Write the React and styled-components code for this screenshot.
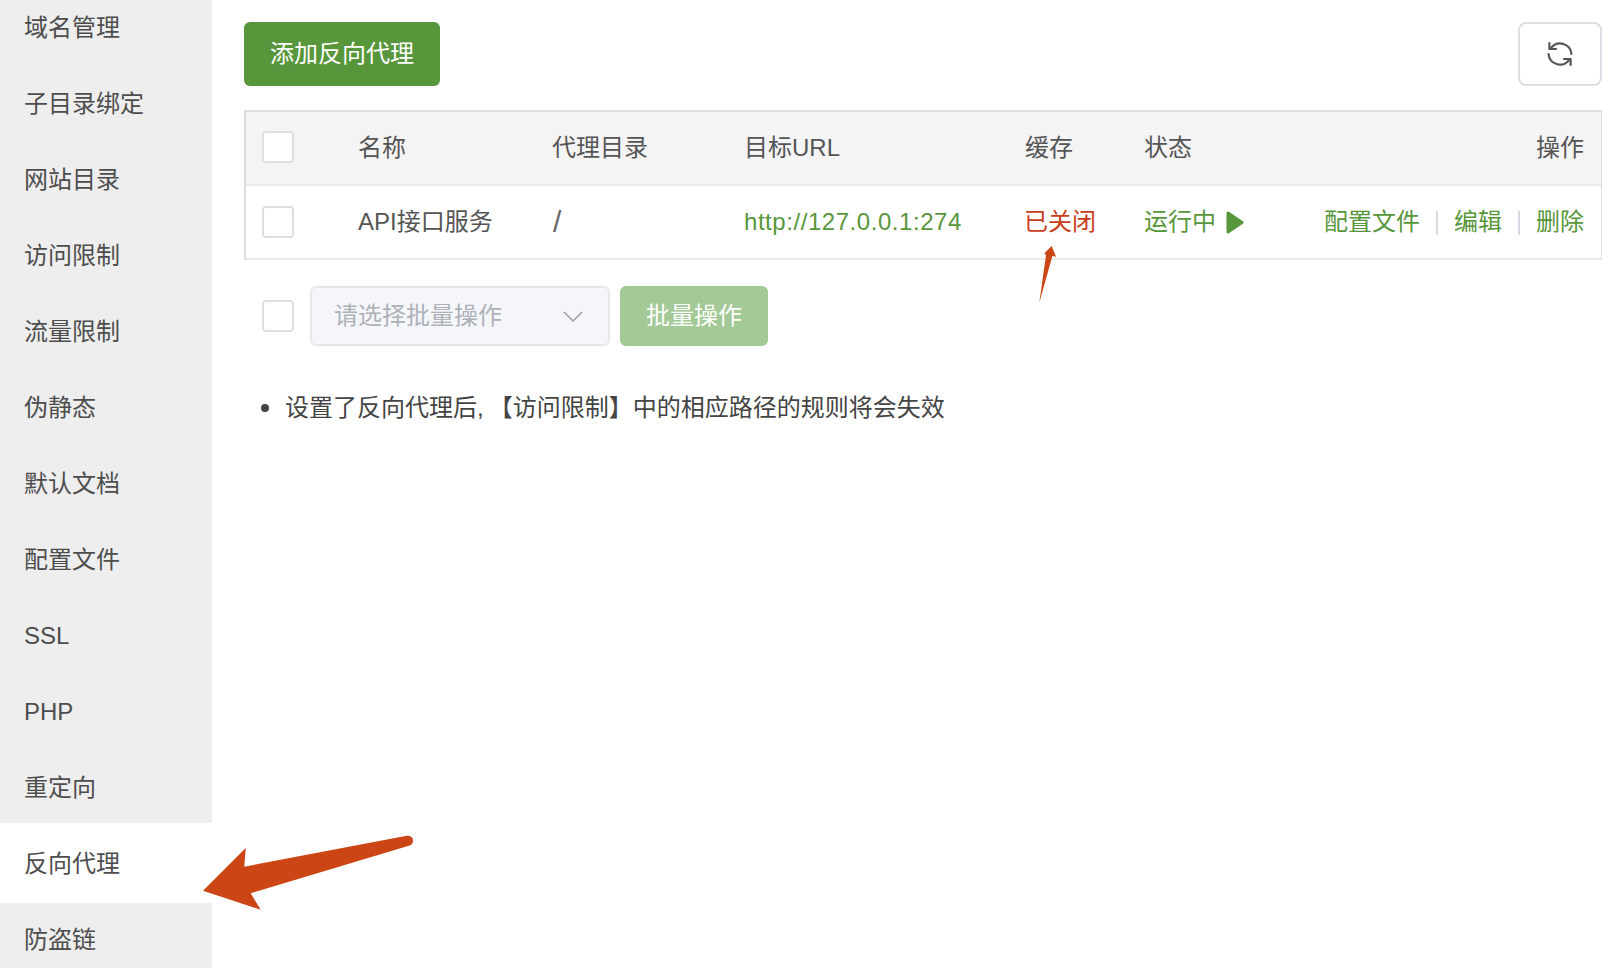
import styled, { createGlobalStyle } from "styled-components";

const GlobalStyle = createGlobalStyle`
  html, body {
    margin: 0;
    padding: 0;
    background: #fff;
    overflow: hidden;
  }
  body {
    font-family: "Liberation Sans", "Noto Sans CJK SC", sans-serif;
    font-size: 24px;
    line-height: 24px;
    color: #444;
  }
  * {
    box-sizing: border-box;
  }
`;

const Page = styled.div`
  position: relative;
  display: flex;
  width: 1602px;
  height: 968px;
  overflow: hidden;
`;

const Sidebar = styled.nav`
  flex: 0 0 212px;
  background: #eee;
  height: 100%;
`;

const SideList = styled.ul`
  list-style: none;
  margin: -11px 0 0;
  padding: 0;
`;

const SideItem = styled.li`
  position: relative;
  height: 76px;
  line-height: 78px;
  padding-left: 24px;
  color: #4d4d4d;
  background: ${(p) => (p.$active ? "#fff" : "transparent")};
  box-shadow: ${(p) => (p.$active ? "0 2px 0 #fff, 0 -2px 0 #fff" : "none")};
`;

const Content = styled.main`
  flex: 1;
  min-width: 0;
  padding-top: 22px;
  padding-left: 32px;
`;

const Toolbar = styled.div`
  display: flex;
  justify-content: space-between;
  align-items: center;
  height: 64px;
`;

const PrimaryButton = styled.button`
  height: ${(p) => p.$height || 64}px;
  width: ${(p) => p.$width}px;
  padding: 0;
  border: 0;
  border-radius: 6px;
  background: ${(p) => (p.$disabled ? "#a2c996" : "#58963c")};
  color: #fff;
  font: inherit;
`;

const RefreshButton = styled.button`
  display: flex;
  align-items: center;
  justify-content: center;
  width: 84px;
  height: 64px;
  padding: 0;
  border: 2px solid #dcdfe6;
  border-radius: 8px;
  background: #fff;
`;

const Table = styled.div`
  margin-top: 24px;
  border: 2px solid #ddd;
  border-bottom: 0;
  border-right-width: 1px;
`;

const Row = styled.div`
  display: grid;
  grid-template-columns: 96px 194px 192px 281px 119px 1fr auto;
  align-items: center;
  height: 74px;
  padding: 0 17px 0 16px;
  background: ${(p) => (p.$head ? "#f4f4f4" : "#fff")};
  border-bottom: 2px solid #e8eaef;
  color: #555;
`;

const CheckBox = styled.span`
  display: block;
  width: 32px;
  height: 32px;
  margin-bottom: ${(p) => (p.$raised ? 2 : 0)}px;
  border: 2px solid #dcdfe6;
  border-radius: 4px;
  background: #fff;
`;

const Slash = styled.span`
  padding-left: 1px;
  font-size: 30px;
  color: #666;
`;

const Url = styled.span`
  color: #58963c;
  letter-spacing: 0.55px;
`;

const Closed = styled.span`
  margin-left: -1px;
  color: #c93c1b;
`;

const Running = styled.span`
  display: flex;
  align-items: center;
  gap: 10px;
  color: #58963c;
`;

const Actions = styled.div`
  display: flex;
  align-items: center;
  color: #58963c;
  white-space: nowrap;
`;

const Divider = styled.span`
  width: 2px;
  height: 24px;
  margin: 1px 16px 0;
  background: #d5dae3;
`;

const BatchBar = styled.div`
  display: flex;
  align-items: center;
  height: 60px;
  margin-top: 26px;
  padding-left: 18px;
`;

const Select = styled.div`
  display: flex;
  align-items: center;
  justify-content: space-between;
  width: 300px;
  height: 60px;
  margin: 0 10px 0 16px;
  padding: 0 25px 0 22px;
  border: 2px solid #e4e7ed;
  border-radius: 6px;
  background: #f5f6fa;
  color: #aeb1b8;
`;

const Notes = styled.ul`
  list-style: none;
  margin: 50px 0 0;
  padding: 0 0 0 17px;
  color: #444;
`;

const Note = styled.li`
  display: flex;
  align-items: center;
  gap: 16px;
  &::before {
    content: "";
    width: 8px;
    height: 8px;
    border-radius: 50%;
    background: #444;
  }
`;

const Comma = styled.span`
  margin-right: 5px;
`;

const Overlay = styled.svg`
  position: absolute;
  left: 0;
  top: 0;
  pointer-events: none;
`;

const menu = [
  "域名管理",
  "子目录绑定",
  "网站目录",
  "访问限制",
  "流量限制",
  "伪静态",
  "默认文档",
  "配置文件",
  "SSL",
  "PHP",
  "重定向",
  "反向代理",
  "防盗链",
];

const RefreshIcon = () => (
  <svg width="28" height="28" viewBox="0 0 28 28" fill="none" stroke="#555" strokeWidth="2.2" strokeLinecap="round" strokeLinejoin="round">
    <path d="M5.2 7.6A11.4 11.4 0 0 1 25.4 14" />
    <path d="M2.6 14A11.4 11.4 0 0 0 22.8 20.4" />
    <path d="M3.4 3v6h6.6" />
    <path d="M24.6 25v-6H18" />
  </svg>
);

const PlayIcon = () => (
  <svg width="18" height="23" viewBox="0 0 18 23">
    <path d="M2 2L16 11.5L2 21Z" fill="#58963c" stroke="#58963c" strokeWidth="3" strokeLinejoin="round" />
  </svg>
);

const Chevron = () => (
  <svg width="20" height="11" viewBox="0 0 20 11" fill="none" stroke="#9a9da6" strokeWidth="1.5">
    <path d="M1 1l9 9 9-9" />
  </svg>
);

const App = () => {
  return (
    <Page>
      <GlobalStyle />
      <Sidebar>
        <SideList>
          {menu.map((m) => (
            <SideItem key={m} $active={m === "反向代理"}>
              {m}
            </SideItem>
          ))}
        </SideList>
      </Sidebar>
      <Content>
        <Toolbar>
          <PrimaryButton $width={196}>添加反向代理</PrimaryButton>
          <RefreshButton>
            <RefreshIcon />
          </RefreshButton>
        </Toolbar>
        <Table>
          <Row $head>
            <CheckBox $raised />
            <span>名称</span>
            <span>代理目录</span>
            <span>目标URL</span>
            <span>缓存</span>
            <span>状态</span>
            <span>操作</span>
          </Row>
          <Row>
            <CheckBox />
            <span>API接口服务</span>
            <Slash>/</Slash>
            <Url>http://127.0.0.1:274</Url>
            <Closed>已关闭</Closed>
            <Running>
              运行中 <PlayIcon />
            </Running>
            <Actions>
              配置文件
              <Divider />
              编辑
              <Divider />
              删除
            </Actions>
          </Row>
        </Table>
        <BatchBar>
          <CheckBox />
          <Select>
            请选择批量操作
            <Chevron />
          </Select>
          <PrimaryButton $disabled $width={148} $height={60}>批量操作</PrimaryButton>
        </BatchBar>
        <Notes>
          <Note>
            <span>设置了反向代理后<Comma>,</Comma>【访问限制】中的相应路径的规则将会失效</span>
          </Note>
        </Notes>
      </Content>
      <Overlay width="1602" height="968" viewBox="0 0 1602 968">
        <path d="M203 890.7L245.7 848L244.3 866.7L406.7 835.7Q413 835.5 413 840.7Q413 845 408 846L250.7 893.3L260.7 909.7Z" fill="#cc4514" />
        <path d="M1051.7 246L1056 256.7L1052.4 256L1039.3 302.7L1046 255L1044.3 253.3Z" fill="#cc4514" />
      </Overlay>
    </Page>
  );
};

export default App;
